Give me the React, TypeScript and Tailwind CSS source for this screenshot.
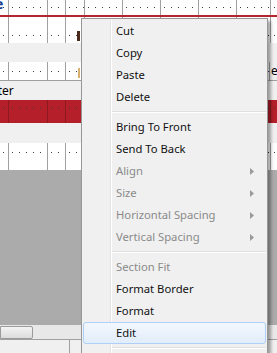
import React from "react";

const dots =
  "bg-[image:radial-gradient(circle_at_0.5px_0.5px,#3a3a3a_0.75px,transparent_0.8px)] bg-[length:7px_9px] bg-repeat-x";

function Cells({ dy, red = false }: { dy: string; red?: boolean }) {
  const widths = [
    "w-[9px]",
    "w-[39px]",
    "w-[18px]",
    "w-[19px]",
    "w-[38px]",
    "w-[38px]",
    "w-[38px]",
    "w-[38px]",
    "w-[34px]",
    "w-[10px]",
  ];
  const line = red ? "border-[#8e1a21]" : "border-[#a0a0a0]";
  return (
    <div className="flex h-full">
      {widths.map((w, i) => (
        <div
          key={i}
          className={`${w} h-full shrink-0 border-r ${line} ${dots} ${dy}`}
        />
      ))}
    </div>
  );
}

type Item = { label: string; disabled?: boolean; sub?: boolean; hover?: boolean } | "sep";

const items: Item[] = [
  { label: "Cut" },
  { label: "Copy" },
  { label: "Paste" },
  { label: "Delete" },
  "sep",
  { label: "Bring To Front" },
  { label: "Send To Back" },
  { label: "Align", disabled: true, sub: true },
  { label: "Size", disabled: true, sub: true },
  { label: "Horizontal Spacing", disabled: true, sub: true },
  { label: "Vertical Spacing", disabled: true, sub: true },
  "sep",
  { label: "Section Fit", disabled: true },
  { label: "Format Border" },
  { label: "Format" },
  { label: "Edit", hover: true },
  "sep",
];

function Arrow() {
  return (
    <svg width="4" height="7" viewBox="0 0 4 7" className="block">
      <path d="M0 0 L4 3.5 L0 7 Z" fill="#9a9a9a" />
    </svg>
  );
}

function Menu() {
  return (
    <div className="absolute left-[81px] top-[18px] w-[187px] h-[340px] bg-[#f0f0f0] border border-[#979797] shadow-[3px_3px_3px_rgba(0,0,0,0.35)] pt-[1px] px-[1px] text-[11.25px]">
      <div className="absolute left-[28px] top-[1px] bottom-0 w-px bg-[#e2e3e3]" />
      <div className="absolute left-[29px] top-[1px] bottom-0 w-px bg-white" />
      <div className="relative flex flex-col">
        {items.map((it, i) =>
          it === "sep" ? (
            <div key={i} className="h-[8px] flex flex-col justify-center pl-[29px]">
              <div className="h-px bg-[#e0e0e0]" />
              <div className="h-px bg-white" />
            </div>
          ) : (
            <div
              key={i}
              className={`h-[22px] flex items-center pl-[32px] pr-[11px] rounded-[3px] border ${
                it.hover
                  ? "border-[#aecff7] bg-[linear-gradient(#f2f7fd,#e2edfa)]"
                  : "border-transparent"
              } ${it.disabled ? "text-[#8a8a8a]" : "text-[#111]"}`}
            >
              <span className="flex-1 leading-none">{it.label}</span>
              {it.sub && <Arrow />}
            </div>
          )
        )}
      </div>
    </div>
  );
}

export default function App() {
  return (
    <div
      className="relative w-[277px] h-[353px] overflow-hidden bg-[#f0f0f0] text-[11.25px]"
      style={{ fontFamily: '"Noto Sans", "Open Sans", sans-serif' }}
    >
      <div className="flex flex-col">
        {/* top row */}
        <div className="h-[15px] bg-white relative">
          <Cells dy="bg-[position:3px_7px]" />
          <span className="absolute left-[-5px] top-[-5px] text-[14px] leading-[18px] font-bold text-[#1a3d8f]">
            e
          </span>
        </div>
        <div className="h-[2px] bg-[#b3262e]" />
        {/* row 2 */}
        <div className="h-[26px] bg-white relative">
          <Cells dy="bg-[position:3px_18px]" />
          <div className="absolute left-[77px] top-[14px] w-[3px] h-[10px] bg-[#4a2a1a]" />
        </div>
        <div className="h-[19px] bg-[#f0f0f0]" />
        {/* row 3 */}
        <div className="h-[19px] bg-white relative border-b border-[#a0a0a0]">
          <Cells dy="bg-[position:3px_9px]" />
          <div className="absolute left-[78px] top-[6px] w-[2px] h-[10px] bg-[#d9b070]" />
          <div className="absolute left-[269px] top-0 h-full w-[8px] bg-[#f0f0f0] border-l border-[#a0a0a0] flex items-center overflow-hidden">
            <span className="text-[12px] text-black ml-[1px] leading-none">ec</span>
          </div>
        </div>
        {/* section bar */}
        <div className="h-[19px] bg-[#f0f0f0] flex items-center overflow-hidden">
          <span className="ml-[-23px] text-[12px] text-black leading-none">Footer</span>
        </div>
        {/* red band */}
        <div className="h-[23px] bg-[#b41f29]">
          <Cells red dy="bg-[position:3px_8px]" />
        </div>
        <div className="h-[20px] bg-[#f0f0f0]" />
        {/* row 4 */}
        <div className="h-[27px] bg-white">
          <Cells dy="bg-[position:3px_9px]" />
        </div>
        <div className="h-[155px] bg-[#ababab]" />
        {/* scrollbar */}
        <div className="h-[15px] bg-[#e8e8e8] flex items-center border-b border-[#a0a0a0]">
          <div className="w-[33px] h-[13px] rounded-r-[2px] border border-[#9a9a9a] bg-[linear-gradient(#f3f3f3,#dcdcdc)]" />
        </div>
        <div className="h-[13px] bg-[#f0f0f0] flex">
          <div className="w-[70px] border-r border-[#a0a0a0]" />
        </div>
      </div>
      <Menu />
    </div>
  );
}
